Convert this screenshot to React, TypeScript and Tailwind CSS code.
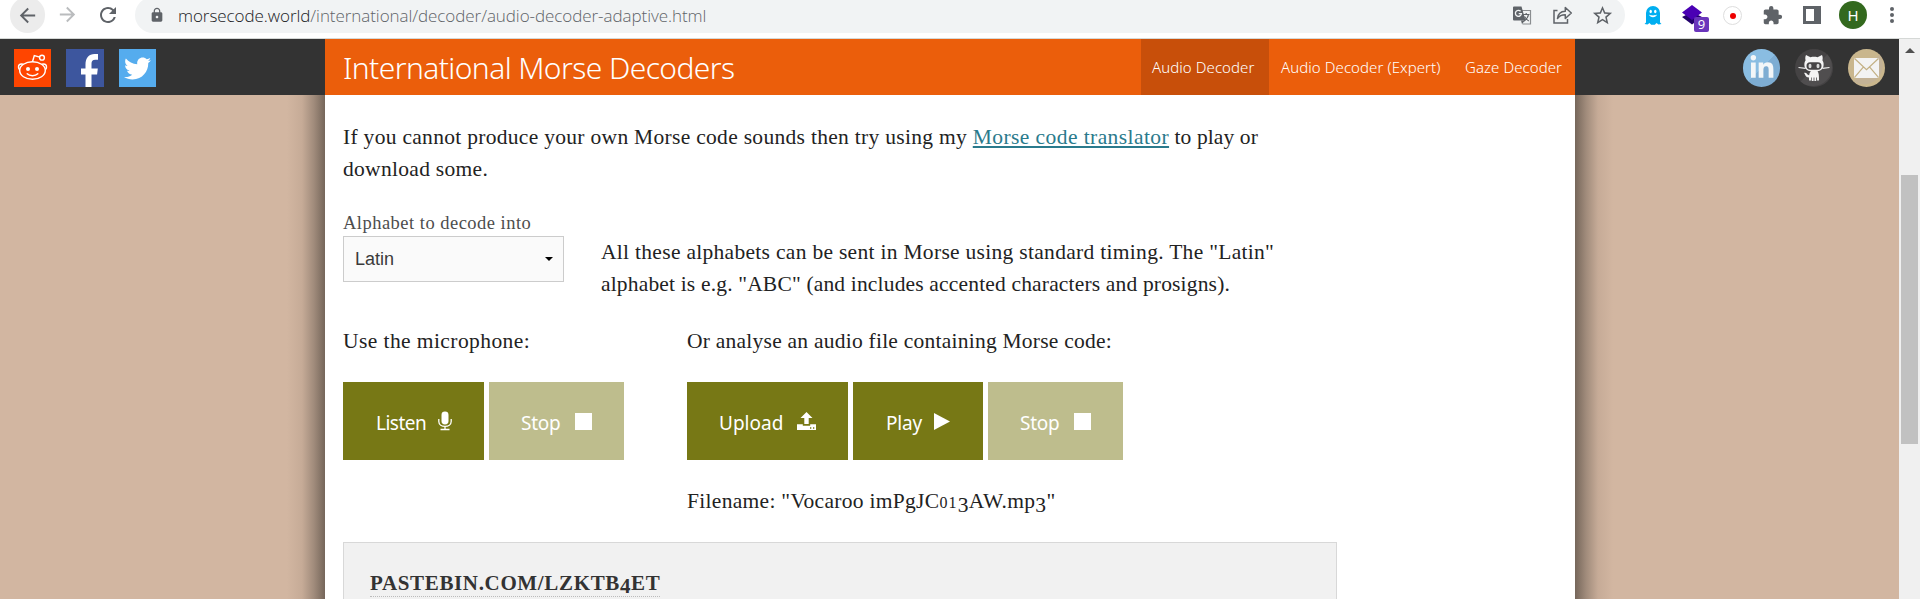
import type { ReactNode } from "react";
import { FaTwitter, FaLinkedinIn } from "react-icons/fa";
import { MdArrowBack, MdArrowForward, MdRefresh, MdLock, MdStarBorder, MdExtension } from "react-icons/md";

function TranslateIcon() {
  return (
    <svg width="19" height="19" viewBox="0 0 19 19" fill="none">
      <path d="M9 4.500h8.500v13.500H9.500" stroke="#8a8d90" strokeWidth="1.200" />
      <path d="M10 8.500h6.500M13.200 7v1.500M15.500 8.500c-.5 3-2.200 5-4.500 6.500M11.500 10.500c1 2 2.500 3.500 4.300 4.500" stroke="#5f6368" strokeWidth="1.200" />
      <path d="M1 .5h7.500l4 14H1a1 1 0 0 1-1-1v-12a1 1 0 0 1 1-1z" fill="#5f6368" />
      <path d="M8 14.500h4L9 18z" fill="#5f6368" />
      <path d="M7.600 5.300A3 3 0 1 0 8.400 7.700H5.700" stroke="#f1f3f4" strokeWidth="1.300" />
    </svg>
  );
}

function ShareIcon() {
  return (
    <svg width="20" height="18" viewBox="0 0 20 18" fill="none" stroke="#5f6368" strokeWidth="1.500">
      <path d="M4.500 4.500H1v12.500h13.500V13" />
      <path d="M4.500 12.500c.4-4.200 3-7 7.800-7.200V1.500l6 5.500-6 5.500V8.800c-3.600 0-6 1-7.800 3.700z" strokeLinejoin="round" />
    </svg>
  );
}

function GhostIcon() {
  return (
    <svg width="18" height="19" viewBox="0 0 18 19">
      <path d="M2 16.500V7a7 7 0 0 1 14 0v9.500l1.500 1.500-3 .5-2-1.500-1.700 1.800H7.200L5.500 17l-2 1.500-3-.5z" fill="#00aef0" />
      <ellipse cx="6.700" cy="5.500" rx="1.200" ry="1.700" fill="#fff" />
      <ellipse cx="11.300" cy="5.500" rx="1.200" ry="1.700" fill="#fff" />
      <path d="M5 8.500c1 3.500 7 3.500 8 0-2 1.200-6 1.200-8 0z" fill="#fff" />
    </svg>
  );
}

function StackIcon() {
  return (
    <div className="relative h-7 w-7">
      <svg width="20" height="20" viewBox="0 0 20 20">
        <path d="M0 12l10-5 10 5-10 7.500z" fill="#22006b" />
        <path d="M0 7.500L10 0l10 7.500L10 15z" fill="#4a00b4" />
      </svg>
      <span className="absolute top-3 left-[12px] flex h-[15px] w-[15px] items-center justify-center rounded-[2px] bg-[#6a35bb] font-['Open_Sans',sans-serif] text-[13px] leading-none text-white">
        9
      </span>
    </div>
  );
}

function RedditIcon() {
  return (
    <svg width="37" height="38" viewBox="0 0 37 38">
      <rect width="37" height="38" fill="#ff4500" />
      <g fill="none" stroke="#fff" strokeWidth="1.400">
        <circle cx="7.500" cy="18" r="3" />
        <circle cx="29.500" cy="18" r="3" />
        <ellipse cx="18.500" cy="21.500" rx="12.800" ry="8.800" fill="#ff4500" />
        <path d="M18.500 12.700l1.800-6.200 5.500 1.600" />
        <circle cx="28" cy="8.700" r="2.400" />
        <path d="M13.200 24.800c2.500 2.600 8.100 2.600 10.600 0" strokeLinecap="round" />
      </g>
      <circle cx="14" cy="20" r="2" fill="#fff" />
      <circle cx="23" cy="20" r="2" fill="#fff" />
    </svg>
  );
}

function OctocatIcon() {
  return (
    <svg width="38" height="38" viewBox="0 0 38 38">
      <circle cx="19" cy="19" r="19" fill="#454344" />
      <path d="M5.600 32.400L32.400 5.600a19 19 0 0 1-26.800 26.800z" fill="#504e4f" />
      <path d="M3.500 18.500l7 .8M34.500 18.500l-7 .8" stroke="#f1f1f1" strokeWidth="1.200" />
      <path d="M11 6l4.500 2.200c2.500-.6 4.500-.6 7 0L27 6c1 2.200.8 4 .4 5.200 1.600 2 1.400 5.200.8 7-.9 2.800-4 4.300-9.200 4.300s-8.300-1.500-9.200-4.300c-.6-1.800-.8-5 .8-7C10.200 10 10 8.200 11 6z" fill="#f4f4f4" />
      <rect x="11.500" y="13.300" width="15" height="7.400" rx="3.700" fill="#454344" />
      <ellipse cx="15" cy="17" rx="1.500" ry="2.200" fill="#d8d8d8" />
      <ellipse cx="23" cy="17" rx="1.500" ry="2.200" fill="#d8d8d8" />
      <path d="M16 22h6.500c1.500 2 1.500 5 1.500 9.500h-2v-3h-.8V32h-1.800v-3.500h-.8V32h-1.900v-3.500H16v3h-2v-3c-4 0-3.500-3.500-5-4.500 3-1 3 2.500 5.200 2.200.2-1.800.8-3 1.800-4.200z" fill="#f4f4f4" />
    </svg>
  );
}

function MailIcon() {
  return (
    <svg width="37" height="38" viewBox="0 0 37 38">
      <ellipse cx="18.500" cy="19" rx="18.500" ry="19" fill="#c9b68d" />
      <path d="M5.600 32.400L31.400 5.600A19 19 0 0 1 5.600 32.400z" fill="#c3b296" />
      <rect x="6" y="9" width="25" height="20" rx="2" fill="#f3f3f3" />
      <path d="M6.800 9.800l11.700 11 11.700-11M6.800 28.200l8.500-10M30.200 28.200l-8.500-10" fill="none" stroke="#c3b084" strokeWidth="1.200" />
    </svg>
  );
}

function MicIcon() {
  return (
    <svg width="14" height="20" viewBox="0 0 14 20" fill="none" stroke="#fff" strokeWidth="1.300">
      <rect x="3.500" y="0.500" width="7" height="13" rx="3.400" fill="#fff" stroke="none" />
      <path d="M.8 8v2.500C.8 17 13.200 17 13.200 10.500V8M7 15.300V18M2.500 18.500h9" />
    </svg>
  );
}

function UploadIcon() {
  return (
    <svg width="19" height="18" viewBox="0 0 19 18" fill="#fff">
      <path d="M9.500 0L15.500 6H11.700v6H7.300V6H3.500z" />
      <path d="M0 12.300h5.800v1.500h7.400v-1.500H19V18H0z" />
      <path d="M13 15.200h1.300v1.500H13zM16 15.200h1.300v1.500H16z" fill="#777815" />
    </svg>
  );
}

const StopIcon = () => <span className="block h-[17px] w-[17px] bg-white" />;

const PlayIcon = () => (
  <svg width="16" height="17" viewBox="0 0 16 17">
    <path d="M0 0L16 8.500 0 17z" fill="#fff" />
  </svg>
);

type ButtonProps = { label: string; labelClass: string; icon: ReactNode; className: string };

function ActionButton({ label, labelClass, icon, className }: ButtonProps) {
  return (
    <button className={`flex h-[78px] items-start pt-[25px] font-['Noto_Sans','Open_Sans',sans-serif] text-[19px] leading-[32px] text-white ${className}`}>
      <span className={labelClass}>{label}</span>
      {icon}
    </button>
  );
}

function Toolbar() {
  return (
    <div className="flex h-[39px] shrink-0 items-start border-b border-[#d5d8d6] bg-white text-[#5f6368]">
      <div className="-mt-[3px] ml-[10px] flex h-[36px] w-[35px] items-center justify-center rounded-full bg-[#ececec]">
        <MdArrowBack size={23} />
      </div>
      <MdArrowForward size={23} className="mt-[3px] ml-[11px] text-[#babcbe]" />
      <MdRefresh size={24} className="mt-[3px] ml-[17px]" />
      <div className="-mt-[3px] ml-[15px] flex h-[36px] w-[1490px] items-center rounded-full bg-[#f1f3f4]">
        <MdLock size={16} className="ml-[14px]" />
        <div className="mt-px ml-[13px] font-['Open_Sans','Noto_Sans',sans-serif] text-[17px] leading-6 font-light tracking-[-0.06px] whitespace-nowrap text-[#5f6368]">
          <span className="text-[#202124]">morsecode.world</span>
          /international/decoder/audio-decoder-adaptive.html
        </div>
        <div className="mr-[11px] ml-auto flex items-center">
          <TranslateIcon />
          <div className="ml-[21px]">
            <ShareIcon />
          </div>
          <MdStarBorder size={23} className="ml-[18px]" />
        </div>
      </div>
      <div className="mt-[6px] ml-[19px]">
        <GhostIcon />
      </div>
      <div className="mt-[5px] ml-[20px]">
        <StackIcon />
      </div>
      <div className="mt-[6px] ml-[13px] flex h-[19px] w-[19px] items-center justify-center rounded-full border border-[#dedede] bg-white">
        <span className="h-[6px] w-[6px] rounded-full bg-[#ee0000]" />
      </div>
      <MdExtension size={21} className="mt-[5px] ml-[20px]" />
      <div className="mt-[6px] ml-[20px] h-[18px] w-[18px] border-[3px] border-r-[7px] border-[#5f6368]" />
      <div className="mt-px ml-[18px] flex h-7 w-7 items-center justify-center rounded-full bg-[#33691e] font-['Noto_Sans',sans-serif] text-[15px] text-white">
        H
      </div>
      <div className="mt-[7px] ml-[23px] flex flex-col gap-[2px]">
        <span className="h-1 w-1 rounded-full bg-[#5f6368]" />
        <span className="h-1 w-1 rounded-full bg-[#5f6368]" />
        <span className="h-1 w-1 rounded-full bg-[#5f6368]" />
      </div>
    </div>
  );
}

function Header() {
  return (
    <header className="z-10 flex h-[56px] shrink-0 bg-[#333333]">
      <div className="flex w-[325px] pt-[10px] pl-[14px]">
        <RedditIcon />
        <div className="ml-[15px] flex h-[38px] w-[38px] items-end justify-end overflow-hidden bg-[#3d569e]">
          <svg width="24" height="33" viewBox="0 0 24 33">
            <path d="M5.500 33V20.500H1v-6h4.500V10.500C5.500 4 9 0 14.500 0H18v5.800h-2.800c-2.600 0-3.700 1.400-3.700 3.900v4.800H17.800l-.7 6H11.500V33z" fill="#fff" />
          </svg>
        </div>
        <div className="ml-[15px] flex h-[38px] w-[37px] items-center justify-center bg-[#55acee] text-white">
          <FaTwitter size={27} />
        </div>
      </div>
      <div className="flex w-[1250px] justify-between bg-[#eb5e0b] font-['Noto_Sans','Open_Sans',sans-serif] font-light text-white">
        <h1 className="pl-[18px] text-[30px] leading-[58px] tracking-[-0.58px]">International Morse Decoders</h1>
        <nav className="flex text-[15px] leading-[57px] tracking-[0.08px]">
          <a className="w-[128px] bg-[#c84f0a] pl-[11px]">Audio Decoder</a>
          <a className="w-[184px] pl-[12px]">Audio Decoder (Expert)</a>
          <a className="w-[122px] pl-[12px]">Gaze Decoder</a>
        </nav>
      </div>
      <div className="flex pt-[10px] pl-[168px]">
        <div className="flex h-[38px] w-[37px] items-center justify-center rounded-full bg-linear-[135deg,#8abde2_50%,#7eadd3_50%] text-[#f3f6f8]">
          <FaLinkedinIn size={26} />
        </div>
        <div className="ml-[15px]">
          <OctocatIcon />
        </div>
        <div className="ml-[15px]">
          <MailIcon />
        </div>
      </div>
    </header>
  );
}

function Content() {
  return (
    <main className="h-[504px] w-[1250px] overflow-hidden bg-white px-[18px] pt-[26px]">
      <p className="w-[960px]">
        If you cannot produce your own Morse code sounds then try using my{" "}
        <a className="tracking-[0.42px] text-[#2a7a8c] underline decoration-2 underline-offset-[2px]">Morse code translator</a>
        <span className="tracking-[0.1px]"> to play or</span>
        <br />
        download some.
      </p>
      <div className="flex items-end pt-6">
        <div className="h-[91px] w-[258px]">
          <label className="block h-[27px] text-[18.5px] leading-[28px] tracking-[0.48px] text-[#4d4d4d]">Alphabet to decode into</label>
          <div className="flex h-[46px] w-[221px] items-center justify-between border border-[#cccccc] bg-[#fafafa] pr-[10px] pl-[11px] font-['Liberation_Sans',sans-serif] text-[18px] tracking-normal text-[#3a3a3a]">
            Latin
            <svg width="8" height="4" viewBox="0 0 8 4">
              <path d="M0 0h8L4 4z" fill="#000" />
            </svg>
          </div>
        </div>
        <div>
          <p>All these alphabets can be sent in Morse using standard timing. The "Latin"</p>
          <p className="tracking-[0.17px]">alphabet is e.g. "ABC" (and includes accented characters and prosigns).</p>
        </div>
      </div>
      <div className="flex pt-[25px]">
        <section className="w-[344px]">
          <p className="tracking-[0.42px]">Use the microphone:</p>
          <div className="mt-[25px] flex gap-[5px]">
            <ActionButton
              label="Listen"
              labelClass="w-[53px] tracking-[-0.5px] text-left"
              className="w-[141px] bg-[#777815] pl-[33px] gap-[9px]"
              icon={<span className="pt-[4px]"><MicIcon /></span>}
            />
            <ActionButton
              label="Stop"
              labelClass="w-[45px] tracking-[-0.3px] text-left"
              className="w-[135px] bg-[#bebd8d] pl-[32px] gap-[9px]"
              icon={<span className="pt-[6px]"><StopIcon /></span>}
            />
          </div>
        </section>
        <section>
          <p className="tracking-[0.24px]">Or analyse an audio file containing Morse code:</p>
          <div className="mt-[25px] flex gap-[5px]">
            <ActionButton
              label="Upload"
              labelClass="w-[68px] tracking-[0px] text-left"
              className="w-[161px] bg-[#777815] pl-[32px] gap-[10px]"
              icon={<span className="pt-[5px]"><UploadIcon /></span>}
            />
            <ActionButton
              label="Play"
              labelClass="w-[38px] tracking-[-0.2px] text-left"
              className="w-[130px] bg-[#777815] pl-[33px] gap-[10px]"
              icon={<span className="pt-[6px]"><PlayIcon /></span>}
            />
            <ActionButton
              label="Stop"
              labelClass="w-[45px] tracking-[-0.3px] text-left"
              className="w-[135px] bg-[#bebd8d] pl-[32px] gap-[9px]"
              icon={<span className="pt-[6px]"><StopIcon /></span>}
            />
          </div>
          <p className="mt-[25px] h-8">
            Filename: "Vocaroo imPgJC<span className="text-[16px] tracking-[1.2px]">01</span>
            <span className="relative top-1">3</span>AW.mp<span className="relative top-1">3</span>"
          </p>
        </section>
      </div>
      <div className="mt-[25px] h-[57px] w-[994px] border border-b-0 border-[#d8d8d8] bg-[#f1f1f1] pt-[29px] pl-[26px]">
        <h2 className="h-[25px] w-fit border-b border-dotted border-[#bbbbbb] text-[21px] leading-[23px] font-bold tracking-[0.65px] text-[#333333]">
          PASTEBIN.COM/LZKTB<span className="relative top-[3px]">4</span>ET
        </h2>
      </div>
    </main>
  );
}

export default function App() {
  return (
    <div className="flex h-[599px] w-[1920px] flex-col overflow-hidden">
      <Toolbar />
      <div className="flex h-[560px]">
        <div className="flex w-[1899px] flex-col overflow-hidden bg-[#d2b6a1] font-['Liberation_Serif',serif] text-[21.5px] leading-[32px] tracking-[0.3px] whitespace-nowrap text-[#222222]">
          <Header />
          <div className="flex">
            <div className="h-[504px] w-[325px] bg-[linear-gradient(to_left,#75665a_0,#a08b7b_11px,#c6ab97_23px,#d2b6a1_38px)]" />
            <Content />
            <div className="h-[504px] grow bg-[linear-gradient(to_right,#75665a_0,#a08b7b_11px,#c6ab97_23px,#d2b6a1_38px)]" />
          </div>
        </div>
        <div className="flex w-[21px] flex-col items-center bg-[#f0f0f0] pt-[9px]">
          <svg width="10" height="5" viewBox="0 0 10 5">
            <path d="M5 0l5 5H0z" fill="#505050" />
          </svg>
          <div className="mt-[122px] h-[269px] w-[17px] bg-[#c1c1c1]" />
        </div>
      </div>
    </div>
  );
}
